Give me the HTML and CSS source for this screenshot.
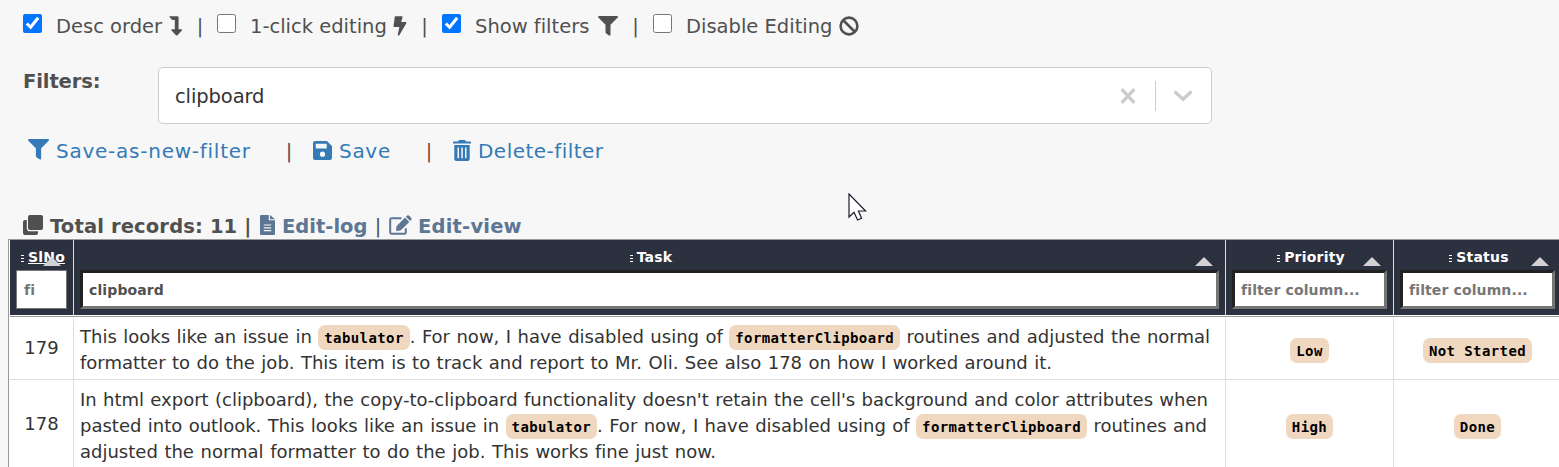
FILE: index.html
```html
<!DOCTYPE html>
<html lang="en">
<head>
<meta charset="utf-8">
<title>Tasks</title>
<link rel="stylesheet" href="styles.css">
</head>
<body>
<div class="options">
  <label class="opt opt-desc"><input type="checkbox" checked><span class="lbl">Desc order</span>
    <svg class="ic" width="14" height="20" viewBox="0 0 14 20"><path d="M0.8 0.3H8.4Q9.6 0.3 9.6 1.5V13.3H12.4Q13.6 13.5 12.9 14.5L8.4 19.3Q7.7 19.9 7 19.3L2.5 14.5Q1.8 13.5 3 13.3H5.8V4.1H3.4L0.5 1.2Q0 0.5 0.8 0.3Z"/></svg></label>
  <span class="sep sep-1">|</span>
  <label class="opt opt-click"><input type="checkbox"><span class="lbl">1-click editing</span>
    <svg class="ic" width="14" height="20" viewBox="0 0 14 20"><path d="M2.5 0.3H9Q9.8 0.5 9.5 1.3L8.2 6H12.8Q13.9 6.2 13.3 7.3L6.3 19.2Q4.8 19.8 4.8 18.5L6.4 11H1.4Q0.4 11 0.5 9.9L1.7 1.2Q1.8 0.3 2.5 0.3Z"/></svg></label>
  <span class="sep sep-2">|</span>
  <label class="opt opt-filters"><input type="checkbox" checked><span class="lbl">Show filters</span>
    <svg class="ic" width="20" height="20" viewBox="0 0 20 20"><path d="M0.9 0H19.1Q20.6 0.4 19.7 1.6L12.5 8.8V19Q12 20 11 19.4L8 17.3Q7.5 16.9 7.5 16.3V8.8L0.3 1.6Q-0.5 0.5 0.9 0Z"/></svg></label>
  <span class="sep sep-3">|</span>
  <label class="opt opt-disable"><input type="checkbox"><span class="lbl">Disable Editing</span>
    <svg class="ic" width="20" height="20" viewBox="0 0 20 20"><g fill="none" stroke="#505050" stroke-width="2.6"><circle cx="10" cy="10" r="8.4"/><path d="M4 4L16 16"/></g></svg></label>
</div>

<div class="filters">
  <strong class="filters-label">Filters:</strong>
  <div class="select">
    <span class="select-value">clipboard</span>
    <svg class="clear" width="16" height="16" viewBox="0 0 16 16"><path d="M2.6 2.2L13.4 13.8M13.4 2.2L2.6 13.8"/></svg>
    <span class="select-divider"></span>
    <svg class="chevron" width="20" height="12" viewBox="0 0 20 12"><path d="M2.6 2.4L10 9.3L17.4 2.4"/></svg>
  </div>
</div>

<div class="actions">
  <a class="act act-new"><svg class="ic" width="21" height="21" viewBox="0 0 20 20"><path d="M0.9 0H19.1Q20.6 0.4 19.7 1.6L12.5 8.8V19Q12 20 11 19.4L8 17.3Q7.5 16.9 7.5 16.3V8.8L0.3 1.6Q-0.5 0.5 0.9 0Z"/></svg><span>Save-as-new-filter</span></a>
  <span class="sep bar-1">|</span>
  <a class="act act-save"><svg class="ic" width="18" height="18" viewBox="0 0 18 18"><path fill-rule="evenodd" d="M2 0H13.2L18 4.8V16Q18 18 16 18H2Q0 18 0 16V2Q0 0 2 0ZM2.6 2.6V7.2H13V2.6ZM9 10A2.5 2.5 0 1 0 9 15A2.5 2.5 0 1 0 9 10Z"/></svg><span>Save</span></a>
  <span class="sep bar-2">|</span>
  <a class="act act-delete"><svg class="ic" width="18" height="21" viewBox="0 0 18 21"><path fill-rule="evenodd" d="M0.6 1.4H5L6 0H12L13 1.4H17.4Q18 1.4 18 2V3.6H0V2Q0 1.4 0.6 1.4ZM1.3 5H16.7V19Q16.7 21 14.7 21H3.3Q1.3 21 1.3 19ZM4.5 7.5V18.2H6V7.5ZM8.3 7.5V18.2H9.8V7.5ZM12 7.5V18.2H13.5V7.5Z"/></svg><span>Delete-filter</span></a>
</div>

<div class="summary">
  <svg class="ic" width="20" height="20" viewBox="0 0 20 20"><path d="M7 0H18Q20 0 20 2V13Q20 15 18 15H7Q5 15 5 13V2Q5 0 7 0Z"/><path d="M3.8 5V13.2Q3.8 16.3 7 16.3H15V18Q15 20 13 20H2Q0 20 0 18V7Q0 5 2 5Z"/></svg>
  <strong class="total">Total records: 11 |</strong>
  <svg class="ic slate log-ic" width="15" height="20" viewBox="0 0 15 20"><path fill-rule="evenodd" d="M1 0H8.8V5.2H15V19Q15 20 14 20H1Q0 20 0 19V1Q0 0 1 0ZM3.8 9.4V10.6H11.2V9.4ZM3.8 12.2V13.4H11.2V12.2ZM3.8 15V16.2H11.2V15Z"/><path d="M10 0L15 4.2H10Z"/></svg>
  <a class="slate log">Edit-log</a>
  <span class="sep log-sep">|</span>
  <svg class="ic slate view-ic" width="23" height="20" viewBox="0 0 23 20"><path fill="none" stroke="#5d7694" stroke-width="2" d="M12.5 3.2H2.6Q1.2 3.2 1.2 4.6V17.4Q1.2 18.8 2.6 18.8H15.4Q16.8 18.8 16.8 17.4V13.2"/><path d="M16 2.6L20.3 6.9L11.5 15.4L7 16L7.5 11.2ZM16.9 1.7L18.2 0.5Q19 -0.2 20 0.6L22.3 2.9Q23 3.8 22.3 4.7L21.1 6Z"/></svg>
  <a class="slate view">Edit-view</a>
</div>

<div class="grid">
  <div class="head">
    <div class="th th-no"><div class="title"><svg class="dots" width="3" height="8" viewBox="0 0 3 8"><path d="M0 .5H4M0 3.5H4M0 6.5H4"/></svg><u>SlNo</u></div><i class="sort"></i><input class="f-no" placeholder="fi"></div>
    <div class="th"><div class="title"><svg class="dots" width="3" height="8" viewBox="0 0 3 8"><path d="M0 .5H4M0 3.5H4M0 6.5H4"/></svg>Task</div><i class="sort"></i><input value="clipboard"></div>
    <div class="th"><div class="title"><svg class="dots" width="3" height="8" viewBox="0 0 3 8"><path d="M0 .5H4M0 3.5H4M0 6.5H4"/></svg>Priority</div><i class="sort"></i><input placeholder="filter column..."></div>
    <div class="th"><div class="title"><svg class="dots" width="3" height="8" viewBox="0 0 3 8"><path d="M0 .5H4M0 3.5H4M0 6.5H4"/></svg>Status</div><i class="sort"></i><input placeholder="filter column..."></div>
  </div>
  <div class="row row-a">
    <div class="td">179</div>
    <div class="td task">
      <p class="l1">This looks like an issue in <code>tabulator</code>. For now, I have disabled using of <code>formatterClipboard</code> routines and adjusted the normal</p>
      <p class="l2">formatter to do the job. This item is to track and report to Mr. Oli. See also 178 on how I worked around it.</p>
    </div>
    <div class="td tag"><code>Low</code></div>
    <div class="td tag"><code>Not Started</code></div>
  </div>
  <div class="row row-b">
    <div class="td">178</div>
    <div class="td task">
      <p class="l3">In html export (clipboard), the copy-to-clipboard functionality doesn't retain the cell's background and color attributes when</p>
      <p class="l4">pasted into outlook. This looks like an issue in <code>tabulator</code>. For now, I have disabled using of <code>formatterClipboard</code> routines and</p>
      <p class="l5">adjusted the normal formatter to do the job. This works fine just now.</p>
    </div>
    <div class="td tag"><code>High</code></div>
    <div class="td tag"><code>Done</code></div>
  </div>
</div>
<svg class="cursor" width="19" height="28" viewBox="0 0 19 28"><path d="M1 1V24L6 19.3L9.6 27L13.6 25.2L10.4 18H17.6Z"/></svg>
</body>
</html>
```
FILE: styles.css
```css
* { box-sizing: border-box; }
body {
  margin: 0;
  height: 467px;
  overflow: hidden;
  background: #f7f7f7;
  color: #505050;
  font: 19.5px/28px "DejaVu Sans", Verdana, sans-serif;
  font-variant-ligatures: none;
  white-space: nowrap;
}
svg { display: block; flex: none; }
.ic { fill: #505050; }

.options { display: flex; height: 52px; padding: 12px 0 0 23px; }
.opt { display: flex; height: 28px; flex: none; }
.opt input { width: 19px; height: 19px; margin: 2px 14px 0 0; flex: none; }
.opt .ic { margin: 4px 0 0 auto; }
.lbl, .options .sep { padding-top: 1px; }
.opt-desc { width: 160px; }
.opt-click { width: 190px; }
.opt-filters { width: 176px; }
.opt-disable { width: 206px; }
.sep { text-align: center; flex: none; }
.sep-1 { width: 34px; }
.sep-2 { width: 35px; }
.sep-3 { width: 35px; }

.filters { display: flex; height: 85px; padding: 15px 0 0 23px; }
.filters-label { width: 135px; padding-top: 1px; letter-spacing: -0.1px; }
.select {
  display: flex;
  align-items: center;
  width: 1054px;
  height: 57px;
  padding-left: 16px;
  background: #fff;
  border: 1px solid #ccc;
  border-radius: 5px;
  color: #333;
}
.select-value { flex: 1; padding-top: 3px; letter-spacing: -0.1px; }
.clear, .chevron { fill: none; stroke: #ccc; stroke-width: 3.4; stroke-linecap: round; }
.select-divider { width: 1px; height: 30px; margin: 0 17px 0 19px; background: #ccc; }
.chevron { margin-right: 18px; }

.actions { display: flex; height: 75px; padding-left: 28px; }
.act { display: flex; color: #337ab7; flex: none; font-size: 20px; letter-spacing: 0.7px; }
.act .ic { fill: #337ab7; margin: 2px 7px 0 0; }
.act-new { width: 223px; }
.act-new span { letter-spacing: 0.75px; }
.act-save { width: 78px; }
.act-save .ic { margin-top: 4px; width: 19px; height: 19px; }
.act-delete span { letter-spacing: 0.47px; }
.act-delete .ic { margin: 3px 7px 0 0; }
.bar-1 { width: 62px; padding: 1px 0 0 14px; }
.bar-2 { width: 62px; padding: 1px 0 0 14px; color: #844; }

.summary { display: flex; height: 27px; padding-left: 23px; }
.summary .ic { margin-top: 3px; }
.total, .slate.log, .slate.view, .log-sep { padding-top: 1px; }
.total { width: 210px; margin-left: 7px; letter-spacing: 0.15px; }
.slate { color: #5d7694; font-weight: bold; }
.ic.slate { fill: #5d7694; }
.log { width: 86px; margin-left: 7px; }
.log-sep { width: 20px; }
.view-ic { margin-left: 1px; }
.view { margin-left: 6px; letter-spacing: 0.2px; }

.grid {
  width: 1552px;
  height: 240px;
  margin-left: 8px;
  border: 1px solid #999;
  border-right: 0;
  background: #fff;
  color: #333;
  font-size: 18px;
}
.head, .row { display: grid; grid-template-columns: 64px 1152px 168px 167px; margin-left: 1px; }
.head { height: 77px; border-bottom: 1px solid #999; background: #2b313f; box-shadow: inset 0 -1px #fff; }
.th { position: relative; height: 75px; padding: 7px 6px 0; border-right: 1px solid #ddd; color: #fff; font-size: 14px; font-weight: bold; }
.th:last-child, .td:last-child { border-right: 0; }
.title { display: flex; justify-content: center; align-items: center; height: 20px; padding-left: 3px; gap: 4px; letter-spacing: 0.2px; }
.dots { stroke: #fff; stroke-width: 1; margin-top: 3px; }
.sort {
  position: absolute;
  right: 12px;
  top: 17px;
  border: 9px solid transparent;
  border-top: 0;
  border-bottom-color: #d2d2d4;
}
.th input {
  display: block;
  width: 100%;
  height: 39px;
  margin-top: 3px;
  padding: 1px 6px 0;
  border: 3px solid;
  border-color: #222 #767676 #767676 #222;
  background: #fff;
  color: #505050;
  font: bold 14px "DejaVu Sans", Verdana, sans-serif;
  font-variant-ligatures: none;
  letter-spacing: 0.12px;
}
.th input::placeholder { color: #767676; }
.th .f-no { width: 51px; border: 1px solid #767676; padding-left: 7px; }

.td { display: flex; justify-content: center; align-items: center; border-right: 1px solid #ddd; border-bottom: 1px solid #ddd; }
.tag { padding-top: 4px; }
.row-a { height: 63px; }
.row-b { height: 90px; }
.row-b .td:first-child { padding-bottom: 1px; }
.row-b .tag { padding-top: 3px; }
.task { display: block; padding: 7px 6px 0; line-height: 26px; }
.task p { margin: 0; height: 26px; text-align: left; text-align-last: justify; }
.l1 { width: 1130px; }
.l2 { width: 972px; }
.l3 { width: 1128px; }
.l4 { width: 1127px; }
.l5 { width: 636px; }
code {
  display: inline-block;
  height: 25px;
  padding: 0 6px;
  border-radius: 7px;
  background: #f0d8c0;
  color: #000;
  font: bold 14px/26px "DejaVu Sans Mono", monospace;
  letter-spacing: 0.4px;
}
.cursor { position: absolute; left: 848px; top: 193px; fill: #fff; stroke: #1c1c2c; stroke-width: 1.2; }
```
